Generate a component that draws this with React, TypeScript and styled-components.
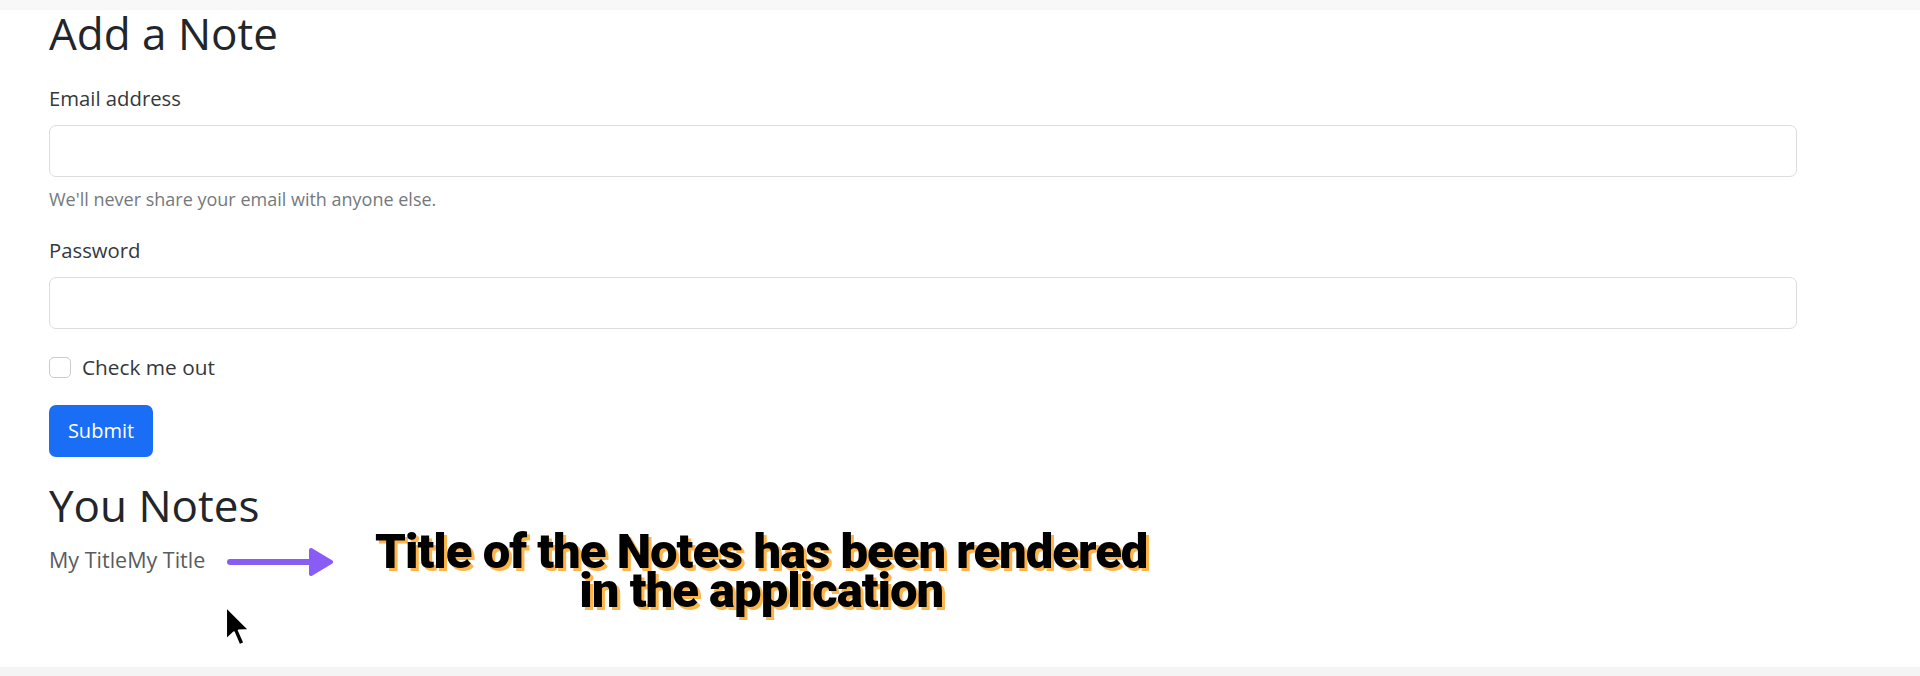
import React, { useState } from 'react'
import styled, { createGlobalStyle } from 'styled-components'

const GlobalStyle = createGlobalStyle`
  html, body {
    margin: 0;
    padding: 0;
  }

  body {
    font-family: 'Open Sans', 'Noto Sans', sans-serif;
    color: #2b2f33;
  }
`

const Page = styled.div`
  position: relative;
  box-sizing: border-box;
  width: 1920px;
  height: 676px;
  overflow: hidden;
  padding: 7px 123px 0 49px;
  background: linear-gradient(
    to bottom,
    #f8f8f8 0,
    #f8f8f8 10px,
    #ffffff 10px,
    #ffffff 667px,
    #f4f4f4 667px
  );
`

const Heading = styled.h2<{ $gap?: number }>`
  margin: ${(p) => p.$gap ?? 0}px 0 0;
  font-size: 44px;
  line-height: 52px;
  font-weight: 500;
  color: #222529;
`

const Field = styled.div<{ $gap: number }>`
  margin-top: ${(p) => p.$gap}px;
  display: flex;
  flex-direction: column;
`

const Label = styled.label`
  font-size: 20.3px;
  line-height: 24px;
  margin-bottom: 15px;
  color: #34383c;
`

const TextInput = styled.input`
  box-sizing: border-box;
  width: 100%;
  height: 52px;
  border: 1px solid #dcdddf;
  border-radius: 7px;
  padding: 0 16px;
  font-family: inherit;
  font-size: 20px;
  background: #fff;
  outline: none;
`

const HelpText = styled.div`
  margin-top: 12px;
  font-size: 18px;
  line-height: 20px;
  color: #74797e;
`

const CheckRow = styled.div`
  margin-top: 26px;
  display: flex;
  align-items: center;
  gap: 11px;
`

const CheckBox = styled.input`
  appearance: none;
  margin: 0;
  width: 22px;
  height: 21px;
  border: 1px solid #c9cbce;
  border-radius: 5px;
  background: #fff;
`

const CheckLabel = styled.label`
  font-size: 20.8px;
  line-height: 24px;
  color: #34383c;
`

const SubmitButton = styled.button`
  margin-top: 26px;
  box-sizing: border-box;
  height: 52px;
  width: 104px;
  padding: 0;
  border: 0;
  border-radius: 7px;
  background: #1a6ef5;
  color: #fff;
  font-family: inherit;
  font-size: 20px;
  line-height: 24px;
  display: block;
`

const NotesRow = styled.div`
  position: relative;
  margin-top: 1px;
  display: flex;
  align-items: baseline;
`

const NoteTitle = styled.span`
  font-size: 21.5px;
  line-height: 24px;
  color: #595c60;
`

const ArrowWrap = styled.span`
  align-self: flex-start;
  margin: 15px 0 0 22px;
  display: block;
  height: 30px;
`

const Annotation = styled.div`
  margin-left: 40px;
  width: 776px;
  text-align: center;
  font-family: Roboto, 'Liberation Sans', sans-serif;
  font-weight: 900;
  font-size: 49px;
  line-height: 39px;
  letter-spacing: -1px;
  color: #000;
  text-shadow: 3px 3px 0 #fdb44b;
`

const Cursor = styled.svg`
  position: absolute;
  left: 175px;
  top: 73px;
`

const PurpleArrow = () => (
  <svg width="106" height="30" viewBox="0 0 106 30">
    <line x1="3" y1="15" x2="88" y2="15" stroke="#8a5cf6" strokeWidth="6" strokeLinecap="round" />
    <path d="M84 3 L104 15 L84 27 Z" fill="#8a5cf6" stroke="#8a5cf6" strokeWidth="4" strokeLinejoin="round" />
  </svg>
)

const App = () => {
  const [email, setEmail] = useState('')
  const [password, setPassword] = useState('')
  const [checked, setChecked] = useState(false)

  const notes = ['My Title', 'My Title']

  return (
    <>
      <GlobalStyle />
      <Page>
        <Heading>Add a Note</Heading>
        <form onSubmit={(e) => e.preventDefault()}>
          <Field $gap={27}>
            <Label htmlFor="email">Email address</Label>
            <TextInput
              type="email"
              id="email"
              value={email}
              onChange={(e) => setEmail(e.target.value)}
            />
            <HelpText>We'll never share your email with anyone else.</HelpText>
          </Field>
          <Field $gap={29}>
            <Label htmlFor="password">Password</Label>
            <TextInput
              type="password"
              id="password"
              value={password}
              onChange={(e) => setPassword(e.target.value)}
            />
          </Field>
          <CheckRow>
            <CheckBox
              type="checkbox"
              id="check"
              checked={checked}
              onChange={(e) => setChecked(e.target.checked)}
            />
            <CheckLabel htmlFor="check">Check me out</CheckLabel>
          </CheckRow>
          <SubmitButton type="submit">Submit</SubmitButton>
        </form>
        <Heading $gap={22}>You Notes</Heading>
        <NotesRow>
          <NoteTitle>{notes.join('')}</NoteTitle>
          <ArrowWrap>
            <PurpleArrow />
          </ArrowWrap>
          <Annotation>
            Title of the Notes has been rendered
            <br />
            in the application
          </Annotation>
          <Cursor width="28" height="43" viewBox="0 0 13 20">
            <path d="M1 1 L1 16 L4.6 12.6 L7.2 18.6 L9.4 17.6 L6.8 11.8 L11.6 11.6 Z" fill="#000" stroke="#fff" strokeWidth="0.8" strokeLinejoin="round" />
          </Cursor>
        </NotesRow>
      </Page>
    </>
  )
}

export default App
